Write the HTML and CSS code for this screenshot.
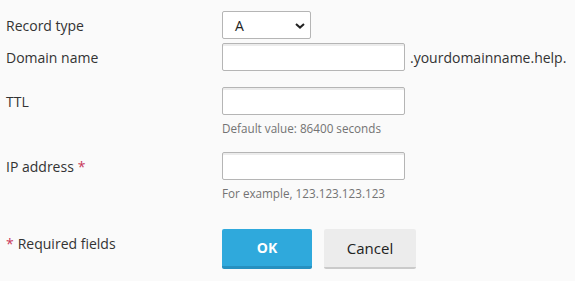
FILE: index.html
```html
<!DOCTYPE html>
<html lang="en">
<head>
    <meta charset="UTF-8">
    <title>Add DNS record</title>
    <link rel="stylesheet" href="styles.css">
</head>
<body>
    <form class="record-form">
        <div class="form-row row-type">
            <label class="field-label">Record type</label>
            <div class="field">
                <div class="select-box">
                    <span>A</span>
                    <svg class="chevron" width="10" height="6" viewBox="0 0 10 6">
                        <path d="M1 1 L5 4.6 L9 1" fill="none" stroke="#222" stroke-width="2"/>
                    </svg>
                </div>
            </div>
        </div>

        <div class="form-row row-domain">
            <label class="field-label">Domain name</label>
            <div class="field inline">
                <input type="text" class="text-input">
                <span class="suffix">.yourdomainname.help.</span>
            </div>
        </div>

        <div class="form-row row-ttl">
            <label class="field-label">TTL</label>
            <div class="field">
                <input type="text" class="text-input">
                <div class="hint">Default value: 86400 seconds</div>
            </div>
        </div>

        <div class="form-row row-ip">
            <label class="field-label">IP address <span class="req">*</span></label>
            <div class="field">
                <input type="text" class="text-input">
                <div class="hint">For example, 123.123.123.123</div>
            </div>
        </div>

        <div class="form-row row-buttons">
            <div class="field-label label-required"><span class="req">*</span> Required fields</div>
            <div class="field inline buttons">
                <button type="button" class="btn btn-primary">OK</button>
                <button type="button" class="btn btn-default">Cancel</button>
            </div>
        </div>
    </form>
</body>
</html>
```

FILE: styles.css
```css
body {
    margin: 0;
    padding: 11px 6px 0;
    background: #fafafa;
    font-family: "Open Sans", "Noto Sans", sans-serif;
    font-size: 14px;
    color: #333;
}
.form-row {
    display: flex;
}
.row-domain {
    margin-top: 4px;
}
.row-ttl {
    margin-top: 16px;
}
.row-ip {
    margin-top: 16px;
}
.row-buttons {
    margin-top: 28px;
}
.field-label {
    width: 216px;
    flex: none;
    display: flex;
    align-items: center;
    height: 28px;
}
.req {
    color: #c8385a;
    margin-left: 4px;
}
.label-required .req {
    margin: 0 4px 0 0;
}
.field.inline {
    display: flex;
    align-items: center;
}
.select-box {
    box-sizing: border-box;
    width: 89px;
    height: 28px;
    border: 1px solid #b5b5b5;
    border-radius: 2px;
    background: #fff;
    display: flex;
    align-items: center;
    justify-content: space-between;
    padding: 0 5px 0 12px;
    color: #222;
}
.chevron {
    margin-top: 1px;
}
.text-input {
    display: block;
    box-sizing: border-box;
    width: 183px;
    height: 28px;
    margin: 0;
    border: 1px solid #b5b5b5;
    border-radius: 2px;
    background: #fff;
    box-shadow: inset 0 2px 0 #ececec;
    font: inherit;
}
.suffix {
    margin-left: 5px;
}
.hint {
    margin-top: 5px;
    font-size: 11.7px;
    line-height: 16px;
    color: #737373;
}
.buttons {
    gap: 12px;
}
.btn {
    box-sizing: border-box;
    height: 40px;
    border: none;
    border-radius: 2px;
    font-family: inherit;
    font-size: 15px;
    cursor: pointer;
}
.btn-primary {
    width: 90px;
    background: #2fa9dc;
    border-bottom: 3px solid #2690c0;
    color: #fff;
    font-weight: bold;
    font-size: 14px;
}
.btn-default {
    width: 92px;
    background: #ececec;
    border-bottom: 2px solid #cacaca;
    color: #222;
}
```
